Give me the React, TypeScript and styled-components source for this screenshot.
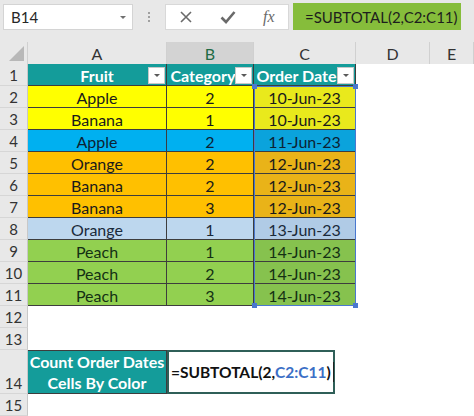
import React from 'react'
import styled, { createGlobalStyle } from 'styled-components'

const GlobalStyle = createGlobalStyle`
  html, body {
    margin: 0;
    padding: 0;
    background: #ffffff;
  }
  body {
    font-family: Lato, "Open Sans", "Liberation Sans", sans-serif;
    width: 474px;
    height: 416px;
    overflow: hidden;
  }
`

const COLS = [28, 139, 87, 102, 74, 44]
const TEAL = '#149c9a'

const Page = styled.div`
  position: relative;
  width: 474px;
  height: 416px;
  background: #ffffff;
`

const TopBar = styled.div`
  display: flex;
  align-items: flex-start;
  height: 42px;
  padding: 4px 0 0 3px;
  box-sizing: border-box;
  background: #e8e8e8;
`

const NameBox = styled.div`
  display: flex;
  align-items: center;
  justify-content: space-between;
  width: 130px;
  height: 26px;
  box-sizing: border-box;
  padding: 0 6px 0 7px;
  background: #ffffff;
  border: 1px solid #d4d4d4;
  font-size: 15px;
  color: #262626;
`

const Caret = styled.span`
  width: 0;
  height: 0;
  border-left: 3px solid transparent;
  border-right: 3px solid transparent;
  border-top: 3px solid #707070;
`

const Grip = styled.div`
  display: flex;
  flex-direction: column;
  gap: 2px;
  margin: 8px 15px 0 15px;
  span {
    width: 2px;
    height: 2px;
    background: #a0a0a0;
  }
`

const FxBox = styled.div`
  display: flex;
  align-items: center;
  justify-content: space-around;
  width: 124px;
  height: 26px;
  box-sizing: border-box;
  background: #ffffff;
  border: 1px solid #d8d8d8;
  color: #707070;
`

const FxLabel = styled.span`
  font-family: "Liberation Serif", "DejaVu Serif", serif;
  font-style: italic;
  font-size: 16px;
  color: #6a6a6a;
`

const FormulaBar = styled.div`
  display: flex;
  align-items: center;
  margin-left: 4px;
  width: 168px;
  height: 27px;
  margin-top: -1px;
  padding-left: 12px;
  box-sizing: border-box;
  background: #86bd3b;
  font-size: 15px;
  color: #1d1d1d;
  white-space: nowrap;
  overflow: hidden;
`

const Row = styled.div<{ $h?: number }>`
  display: flex;
  height: ${({ $h }) => $h ?? 22}px;
`

const ColHead = styled.div<{ $w: number; $active?: boolean }>`
  width: ${({ $w }) => $w}px;
  flex: none;
  box-sizing: border-box;
  display: flex;
  align-items: flex-end;
  justify-content: center;
  padding-bottom: 1px;
  background: ${({ $active }) => ($active ? '#d3d3d3' : '#e8e8e8')};
  color: ${({ $active }) => ($active ? '#1f6b45' : '#333333')};
  border-right: 1px solid #d0d0d0;
  font-size: 16px;
`

const Corner = styled.div`
  width: 28px;
  flex: none;
  position: relative;
  background: #e8e8e8;
  border-right: 1px solid #d0d0d0;
  box-sizing: border-box;
  &::after {
    content: '';
    position: absolute;
    right: 3px;
    bottom: 3px;
    width: 0;
    height: 0;
    border-left: 15px solid transparent;
    border-bottom: 15px solid #b8b8b8;
  }
`

const RowHead = styled.div`
  width: 28px;
  flex: none;
  box-sizing: border-box;
  display: flex;
  align-items: flex-end;
  justify-content: center;
  background: #e8e8e8;
  border-right: 1px solid #c8c8c8;
  border-bottom: 1px solid #d6d6d6;
  color: #333333;
  font-size: 15px;
  line-height: 20px;
`

const Cell = styled.div<{ $w: number; $bg?: string; $head?: boolean; $color?: string }>`
  position: relative;
  width: ${({ $w }) => $w}px;
  flex: none;
  box-sizing: border-box;
  display: flex;
  align-items: center;
  justify-content: center;
  background: ${({ $bg }) => $bg ?? 'transparent'};
  border-right: ${({ $bg }) => ($bg ? '1px solid #3d3d3d' : 'none')};
  border-bottom: ${({ $bg }) => ($bg ? '1px solid #3d3d3d' : 'none')};
  color: ${({ $head, $color }) => ($head ? '#ffffff' : $color ?? '#1a1a1a')};
  font-weight: ${({ $head }) => ($head ? 700 : 400)};
  font-size: 16px;
  white-space: nowrap;
  padding-top: 1px;
`

const Filter = styled.span`
  position: absolute;
  right: 1px;
  top: 3px;
  width: 17px;
  height: 17px;
  box-sizing: border-box;
  background: #ffffff;
  border: 1px solid #c8c8c8;
  &::after {
    content: '';
    position: absolute;
    left: 5px;
    top: 6px;
    border-left: 3px solid transparent;
    border-right: 3px solid transparent;
    border-top: 3px solid #5a5a5a;
  }
`

const LabelCell = styled.div<{ $w: number }>`
  width: ${({ $w }) => $w}px;
  flex: none;
  box-sizing: border-box;
  display: flex;
  flex-direction: column;
  align-items: center;
  justify-content: center;
  background: ${TEAL};
  border-right: 1px solid #3d3d3d;
  border-bottom: 1px solid #3d3d3d;
  border-top: 1px solid #3d3d3d;
  color: #ffffff;
  font-weight: 700;
  font-size: 16px;
  line-height: 21px;
  white-space: nowrap;
`

const EditCell = styled.div`
  position: relative;
  width: 168px;
  flex: none;
  box-sizing: border-box;
  display: flex;
  align-items: center;
  padding-left: 2px;
  background: #ffffff;
  border: 2px solid #2f5f58;
  font-weight: 700;
  font-size: 15.5px;
  color: #111111;
  white-space: nowrap;
  z-index: 2;
`

const Ref = styled.span`
  color: #3b6fc6;
`

const TextCursor = styled.span`
  display: inline-block;
  width: 1px;
  height: 20px;
  margin-left: 2px;
  background: #222222;
`

const Selection = styled.div`
  position: absolute;
  left: 254px;
  top: 86px;
  width: 102px;
  height: 220px;
  box-sizing: border-box;
  border: 1.5px solid #4a78cf;
  pointer-events: none;
`

const Handle = styled.span<{ $x: 'l' | 'r'; $y: 't' | 'b' }>`
  position: absolute;
  width: 5px;
  height: 5px;
  background: #4a78cf;
  ${({ $x }) => ($x === 'l' ? 'left: -3px;' : 'right: -3px;')}
  ${({ $y }) => ($y === 't' ? 'top: -3px;' : 'bottom: -3px;')}
`

const X = () => (
  <svg width="14" height="14" viewBox="0 0 14 14">
    <path d="M2 2 L12 12 M12 2 L2 12" stroke="#6a6a6a" strokeWidth="1.6" />
  </svg>
)

const Check = () => (
  <svg width="16" height="14" viewBox="0 0 16 14">
    <path d="M1.5 7.5 L6 12 L14.5 2" stroke="#6a6a6a" strokeWidth="2.6" fill="none" />
  </svg>
)

type Item = { fruit: string; cat: number; date: string; bg: string; tint: string; ink?: string }

const rows: Item[] = [
  { fruit: 'Apple', cat: 2, date: '10-Jun-23', bg: '#ffff00', tint: '#e9e91c' },
  { fruit: 'Banana', cat: 1, date: '10-Jun-23', bg: '#ffff00', tint: '#e9e91c' },
  { fruit: 'Apple', cat: 2, date: '11-Jun-23', bg: '#00b0f0', tint: '#0ba3dc', ink: '#0d2233' },
  { fruit: 'Orange', cat: 2, date: '12-Jun-23', bg: '#ffc000', tint: '#e9b318' },
  { fruit: 'Banana', cat: 2, date: '12-Jun-23', bg: '#ffc000', tint: '#e9b318' },
  { fruit: 'Banana', cat: 3, date: '12-Jun-23', bg: '#ffc000', tint: '#e9b318' },
  { fruit: 'Orange', cat: 1, date: '13-Jun-23', bg: '#bdd7ee', tint: '#b0cbe6', ink: '#1a2a3a' },
  { fruit: 'Peach', cat: 1, date: '14-Jun-23', bg: '#92d050', tint: '#86c24e', ink: '#143014' },
  { fruit: 'Peach', cat: 2, date: '14-Jun-23', bg: '#92d050', tint: '#86c24e', ink: '#143014' },
  { fruit: 'Peach', cat: 3, date: '14-Jun-23', bg: '#92d050', tint: '#86c24e', ink: '#143014' },
]

export default function App() {
  return (
    <Page>
      <GlobalStyle />
      <TopBar>
        <NameBox>
          B14
          <Caret />
        </NameBox>
        <Grip>
          <span />
          <span />
          <span />
        </Grip>
        <FxBox>
          <X />
          <Check />
          <FxLabel>fx</FxLabel>
        </FxBox>
        <FormulaBar>=SUBTOTAL(2,C2:C11)</FormulaBar>
      </TopBar>

      <Row>
        <Corner />
        <ColHead $w={COLS[1]}>A</ColHead>
        <ColHead $w={COLS[2]} $active>B</ColHead>
        <ColHead $w={COLS[3]}>C</ColHead>
        <ColHead $w={COLS[4]}>D</ColHead>
        <ColHead $w={COLS[5]}>E</ColHead>
      </Row>

      <Row>
        <RowHead>1</RowHead>
        <Cell $w={COLS[1]} $bg={TEAL} $head>
          Fruit
          <Filter />
        </Cell>
        <Cell $w={COLS[2]} $bg={TEAL} $head>
          <span style={{ marginRight: 14 }}>Category</span>
          <Filter />
        </Cell>
        <Cell $w={COLS[3]} $bg={TEAL} $head>
          <span style={{ marginRight: 16 }}>Order Date</span>
          <Filter />
        </Cell>
      </Row>

      {rows.map((r, i) => (
        <Row key={i}>
          <RowHead>{i + 2}</RowHead>
          <Cell $w={COLS[1]} $bg={r.bg} $color={r.ink}>
            {r.fruit}
          </Cell>
          <Cell $w={COLS[2]} $bg={r.bg} $color={r.ink}>
            {r.cat}
          </Cell>
          <Cell $w={COLS[3]} $bg={r.tint} $color={r.ink}>
            {r.date}
          </Cell>
        </Row>
      ))}

      <Row>
        <RowHead>12</RowHead>
      </Row>
      <Row>
        <RowHead>13</RowHead>
      </Row>
      <Row $h={44}>
        <RowHead>14</RowHead>
        <LabelCell $w={COLS[1]}>
          <span>Count Order Dates</span>
          <span>Cells By Color</span>
        </LabelCell>
        <EditCell>
          =SUBTOTAL(2,<Ref>C2:C11</Ref>)
          <TextCursor />
        </EditCell>
      </Row>
      <Row>
        <RowHead>15</RowHead>
      </Row>

      <Selection>
        <Handle $x="l" $y="t" />
        <Handle $x="r" $y="t" />
        <Handle $x="l" $y="b" />
        <Handle $x="r" $y="b" />
      </Selection>
    </Page>
  )
}
